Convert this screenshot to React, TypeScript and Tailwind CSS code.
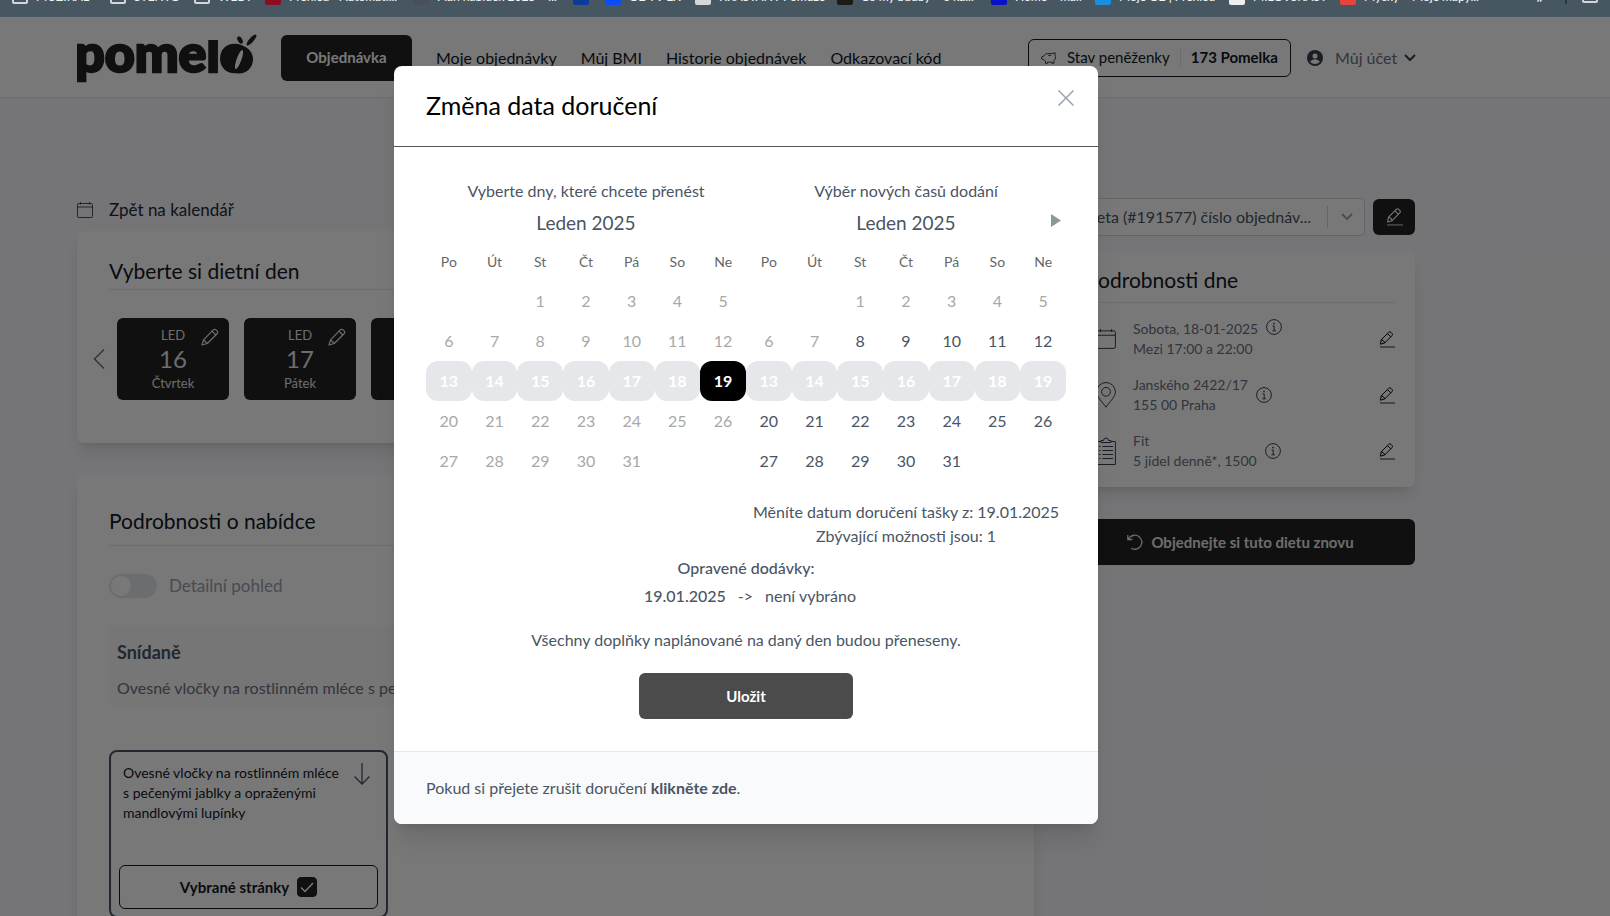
import { useState } from "react";
import type { ReactNode } from "react";
import { clsx } from "clsx";

const BOOKMARKS = [
  { label: "MUZIKÁL", icon: "folder", width: "w-[98px]" },
  { label: "STENTO", icon: "folder", width: "w-[84px]" },
  { label: "WEBY", icon: "folder", width: "w-[71px]" },
  { label: "Přehled - Automati...", icon: "bg-[#8d0c22]", width: "w-[148px]" },
  { label: "Plán nabídek 2025 – ...", icon: "bg-[#4a4f5c]", width: "w-[160px]" },
  { label: "", icon: "bg-[#0b3a9a]", width: "w-[32px]" },
  { label: "O2 TV EX", icon: "bg-[#0a4dff]", width: "w-[90px]" },
  { label: "KRÁSTÁNY Pomůže", icon: "bg-[#d5d8da]", width: "w-[142px]" },
  { label: "Co my budby – o ka...", icon: "bg-[#1c1c12]", width: "w-[154px]" },
  { label: "Home – mail", icon: "bg-[#0612c4]", width: "w-[104px]" },
  { label: "Moje O2 | Přehled", icon: "bg-[#1a8fe0]", width: "w-[134px]" },
  { label: "MILOVSKAST", icon: "bg-[#eeeeee]", width: "w-[111px]" },
  { label: "Myčky – Moje mapy...", icon: "bg-[#e8443c]", width: "w-[196px]" },
];

const NAV = ["Moje objednávky", "Můj BMI", "Historie objednávek", "Odkazovací kód"];

const DAYS = [
  { date: 16, name: "Čtvrtek" },
  { date: 17, name: "Pátek" },
  { date: 18, name: "Sobota" },
];

const WEEKDAYS = ["Po", "Út", "St", "Čt", "Pá", "So", "Ne"];

// January 2025 starts on a Wednesday
const WEEKS = [
  [0, 0, 1, 2, 3, 4, 5],
  [6, 7, 8, 9, 10, 11, 12],
  [13, 14, 15, 16, 17, 18, 19],
  [20, 21, 22, 23, 24, 25, 26],
  [27, 28, 29, 30, 31, 0, 0],
];

function CalendarIcon({ className }: { className: string }) {
  return (
    <svg viewBox="0 0 16 16" fill="none" stroke="currentColor" strokeWidth="0.8" className={className} aria-hidden="true">
      <rect x="0.5" y="1.5" width="15" height="14" rx="1.2" />
      <path d="M.5 5h15M3.5 0v2.5M12.5 0v2.5" />
    </svg>
  );
}

function PencilIcon({ className }: { className: string }) {
  return (
    <svg viewBox="0 0 18 18" fill="none" stroke="currentColor" strokeWidth="1.2" strokeLinejoin="round" className={className} aria-hidden="true">
      <path d="M1 17l1.6-5.2L12.2 1.9a2 2 0 0 1 2.9 0l1 1a2 2 0 0 1 0 2.9L6.3 15.5z" />
      <path d="M2.6 11.8l3.7 3.7M11 3.2l3.8 3.8" />
    </svg>
  );
}

function EditIcon({ className }: { className: string }) {
  return (
    <svg viewBox="0 0 16 17" fill="none" stroke="currentColor" strokeLinejoin="round" className={className} aria-hidden="true">
      <path d="M1.5 13.2l.7-4.4L9.6 1.4a1.7 1.7 0 0 1 2.4 0l.9.9a1.7 1.7 0 0 1 0 2.4L5.7 12z" />
      <path d="M2.2 8.8q2.8.4 3.5 3.2M8.5 2.6l3.2 3.2" />
      <path d="M1 16h15" strokeWidth="0.8" />
    </svg>
  );
}

function InfoIcon() {
  return (
    <svg viewBox="0 0 16 16" fill="none" stroke="currentColor" className="size-4 text-gray-700" aria-hidden="true">
      <circle cx="8" cy="8" r="7.4" />
      <circle cx="8" cy="4.6" r="0.9" fill="currentColor" stroke="none" />
      <path d="M6.6 7h1.6v4.6M6.4 11.8h3.5" />
    </svg>
  );
}

function PinIcon() {
  return (
    <svg viewBox="0 0 20 26" fill="none" stroke="currentColor" className="h-[26px] w-5" aria-hidden="true">
      <path d="M10 25.2C6 19.5.6 14.7.6 9.9a9.4 9.4 0 0 1 18.8 0C19.4 14.7 14 19.5 10 25.2z" />
      <circle cx="10" cy="9.8" r="4.4" />
    </svg>
  );
}

function ClipboardIcon() {
  return (
    <svg viewBox="0 0 20 28" fill="none" stroke="currentColor" className="h-7 w-5" aria-hidden="true">
      <path d="M5 4.5H.6v23h18.8v-23H15" />
      <path d="M5 5.5v-2h2.5a2.5 2.5 0 0 1 5 0H15v2z" />
      <path d="M3 9.5h1.5M3 13.5h1.5M3 17.5h1.5M3 21.5h1.5M6.5 9.5H17M6.5 13.5H17M6.5 17.5H17M6.5 21.5H17" />
    </svg>
  );
}

function Logo() {
  return (
    <svg viewBox="0 0 182 54" className="h-[54px] w-[182px] shrink-0" role="img" aria-label="pomelo">
      <text
        x="-2"
        y="41"
        fontSize="52"
        fontWeight="900"
        fontFamily="Lato, sans-serif"
        fill="#222"
        stroke="#222"
        strokeWidth="2.5"
      >
        pomelo
      </text>
      {/* short ascender on the l */}
      <rect x="128" y="0" width="26" height="9" fill="#fff" />
      <ellipse cx="162" cy="28.5" rx="14" ry="14" fill="#222" />
      <ellipse cx="162" cy="28.5" rx="2.4" ry="10" fill="#fff" transform="rotate(20 162 28.5)" />
      <ellipse cx="163" cy="9" rx="2.3" ry="4" fill="#222" transform="rotate(-28 163 9)" />
      <ellipse cx="174.5" cy="9" rx="2.2" ry="7" fill="#222" transform="rotate(42 174.5 9)" />
    </svg>
  );
}

function BookmarksBar() {
  return (
    <div className="flex h-[17px] items-start overflow-hidden bg-[#465762] pl-3">
      {BOOKMARKS.map((b, i) => (
        <div key={i} className={clsx("-mt-[11px] flex shrink-0 items-center gap-2 overflow-hidden", b.width)}>
          {b.icon === "folder" ? (
            <span className="h-3.5 w-4 shrink-0 rounded-xs border-2 border-gray-300" />
          ) : (
            <span className={clsx("size-4 shrink-0 rounded-xs", b.icon)} />
          )}
          <span className="text-xs leading-4 font-medium whitespace-nowrap text-gray-100">{b.label}</span>
        </div>
      ))}
      <span className="-mt-3 w-[29px] shrink-0 text-lg leading-4 text-gray-100">»</span>
      <span className="h-1 w-0.5 shrink-0 bg-[#2b3740]" />
      <span className="-mt-[11px] ml-[15px] h-3.5 w-4 shrink-0 rounded-xs border-2 border-gray-300" />
    </div>
  );
}

function Header() {
  return (
    <header className="flex h-[81px] items-center border-b border-gray-200 bg-white pt-px pr-[194px] pl-[77px]">
      <Logo />
      <button type="button" className="ml-[22px] h-[46px] w-[131px] shrink-0 rounded-md bg-[#222] text-[15px] font-bold text-white">
        Objednávka
      </button>
      <nav className="ml-6 flex flex-1 gap-6">
        {NAV.map((item) => (
          <a key={item} href="#" className="whitespace-nowrap text-gray-900">
            {item}
          </a>
        ))}
      </nav>
      <div className="flex h-[38px] w-[263px] shrink-0 items-center justify-between rounded-md border border-gray-900 px-3 text-[15px] text-gray-900">
        <svg viewBox="0 0 18 14" fill="none" stroke="currentColor" strokeWidth="0.9" strokeLinejoin="round" className="h-3.5 w-4" aria-hidden="true">
          <path d="M3.5 4.5C4.500 2.800 6 2 8 2h5l2.800-1v2.800c1 2 .6 4.400-1.300 6.200v3h-2.200v-1.300H7.200V13H5v-2.300L3.300 8.800.8 8V5.800z" />
          <path d="M8 4h3.500" />
        </svg>
        <span>Stav peněženky</span>
        <span className="h-5 w-px bg-gray-200" />
        <strong className="font-bold">173 Pomelka</strong>
      </div>
      <button type="button" className="ml-4 flex shrink-0 items-center text-gray-500">
        <svg viewBox="0 0 16 16" className="size-4 text-gray-700" aria-hidden="true">
          <circle cx="8" cy="8" r="8" fill="currentColor" />
          <circle cx="8" cy="6" r="2.5" fill="#fff" />
          <path d="M3.2 12a5.6 5.6 0 0 1 9.600 0 6.500 6.500 0 0 1-9.600 0z" fill="#fff" />
        </svg>
        <span className="ml-3 w-[61px] text-left whitespace-nowrap">Můj účet</span>
        <svg viewBox="0 0 12 8" fill="none" stroke="currentColor" strokeWidth="2" className="ml-2 h-2 w-3 text-gray-700" aria-hidden="true">
          <path d="M1 1l5 5 5-5" />
        </svg>
      </button>
    </header>
  );
}

function DayPicker() {
  return (
    <section className="h-[212px] rounded-md bg-white px-8 pt-[26px] shadow-lg">
      <h2 className="border-b border-gray-200 pb-1 text-[21px] leading-7 text-gray-900">Vyberte si dietní den</h2>
      <div className="-ml-4 flex items-center pt-7">
        <button type="button" aria-label="Předchozí dny" className="mr-3 text-gray-500">
          <svg viewBox="0 0 12 20" fill="none" stroke="currentColor" strokeWidth="1.5" className="h-5 w-3" aria-hidden="true">
            <path d="M11 .5L1.5 10l9.5 9.5" />
          </svg>
        </button>
        <div className="flex gap-[15px]">
          {DAYS.map((day) => (
            <button
              key={day.date}
              type="button"
              className="relative flex h-[82px] w-28 shrink-0 flex-col items-center rounded-md bg-[#222] pt-2 text-gray-200"
            >
              <span className="text-[13px] leading-[18px]">LED</span>
              <span className="text-2xl leading-[30px]">{day.date}</span>
              <span className="text-[13px] leading-[18px]">{day.name}</span>
              <PencilIcon className="absolute top-2.5 right-2.5 size-[18px]" />
            </button>
          ))}
        </div>
      </div>
    </section>
  );
}

function Offer() {
  const [detailed, setDetailed] = useState(false);
  const [selected, setSelected] = useState(true);

  return (
    <section className="mt-8 rounded-md bg-white px-8 pt-8 pb-8 shadow-lg">
      <h2 className="border-b border-gray-200 pb-2.5 text-[21px] leading-7 text-gray-900">Podrobnosti o nabídce</h2>
      <label className="mt-7 flex h-6 items-center gap-3 text-[17px] text-gray-400">
        <input type="checkbox" checked={detailed} onChange={(e) => setDetailed(e.target.checked)} className="peer sr-only" />
        <span className="flex h-6 w-12 items-center rounded-full bg-gray-200 px-0.5 peer-checked:justify-end">
          <span className="size-5 rounded-full bg-white" />
        </span>
        Detailní pohled
      </label>
      <div className="mt-7 h-20 rounded-md bg-neutral-50 px-2 pt-3.5">
        <h3 className="text-lg leading-6 font-bold text-gray-600">Snídaně</h3>
        <p className="mt-3 truncate text-gray-500">Ovesné vločky na rostlinném mléce s pečenými jablky a opraženými mandlovými lupínky</p>
      </div>
      <div className="mt-11 flex h-[168px] w-[279px] flex-col rounded-lg border-2 border-gray-600 px-2 pt-[11px] pb-[7px]">
        <div className="flex justify-between pr-2 pl-1">
          <p className="w-[222px] text-sm leading-5 text-gray-900">
            Ovesné vločky na rostlinném mléce s pečenými jablky a opraženými mandlovými lupínky
          </p>
          <svg viewBox="0 0 16 22" fill="none" stroke="currentColor" strokeWidth="1.3" className="h-[22px] w-4 text-gray-600" aria-hidden="true">
            <path d="M8 0v21M.5 13.5L8 21l7.5-7.5" />
          </svg>
        </div>
        <label className="mt-auto flex h-11 items-center justify-center gap-2 rounded-md border border-gray-900 text-[15px] font-bold text-gray-900">
          Vybrané stránky
          <input type="checkbox" checked={selected} onChange={(e) => setSelected(e.target.checked)} className="peer sr-only" />
          <span className="flex size-5 items-center justify-center rounded-sm border border-[#222] text-white peer-checked:bg-[#222]">
            <svg viewBox="0 0 14 11" fill="none" stroke="currentColor" strokeWidth="1.5" className="h-[11px] w-3.5" aria-hidden="true">
              <path d="M1 5.5l4 4L13 1" />
            </svg>
          </span>
        </label>
      </div>
    </section>
  );
}

function DetailRow({ icon, lines, info }: { icon: ReactNode; lines: [string, string]; info: "first" | "both" }) {
  return (
    <li className="flex h-10 items-center text-sm leading-5 text-gray-500">
      <span className="flex w-[30px] shrink-0 justify-end text-gray-700">{icon}</span>
      <span className="ml-[17px]">
        {lines[0]}
        <br />
        {lines[1]}
      </span>
      <span className={clsx("ml-2", info === "first" && "self-start")}>
        <InfoIcon />
      </span>
      <button type="button" aria-label={`Upravit ${lines[0]}`} className="ml-auto text-black">
        <EditIcon className="h-[17px] w-4" />
      </button>
    </li>
  );
}

function Sidebar() {
  return (
    <aside className="w-[349px] shrink-0">
      <div className="flex items-center gap-2">
        <div className="relative flex-1">
          <select
            aria-label="Objednávka"
            className="h-[38px] w-full appearance-none rounded-sm border border-gray-300 bg-white pr-12 pl-3.5 text-gray-600"
          >
            <option>Dieta (#191577) číslo objednáv...</option>
          </select>
          <span className="pointer-events-none absolute inset-y-2 right-0 flex w-[38px] items-center justify-center border-l border-gray-300 text-gray-400">
            <svg viewBox="0 0 12 8" fill="none" stroke="currentColor" strokeWidth="1.8" className="h-2 w-3" aria-hidden="true">
              <path d="M1 1l5 5 5-5" />
            </svg>
          </span>
        </div>
        <button type="button" aria-label="Upravit objednávku" className="flex h-9 w-[42px] items-center justify-center rounded-md bg-[#222] text-white">
          <EditIcon className="h-[18px] w-[17px]" />
        </button>
      </div>
      <section className="mt-4 h-[235px] rounded-md bg-white px-5 pt-3.5 shadow-lg">
        <h2 className="border-b border-gray-200 pb-2 text-[21px] leading-7 text-gray-900">Podrobnosti dne</h2>
        <ul className="mt-4 space-y-4">
          <DetailRow icon={<CalendarIcon className="size-5" />} lines={["Sobota, 18-01-2025", "Mezi 17:00 a 22:00"]} info="first" />
          <DetailRow icon={<PinIcon />} lines={["Janského 2422/17", "155 00 Praha"]} info="both" />
          <DetailRow icon={<ClipboardIcon />} lines={["Fit", "5 jídel denně*, 1500"]} info="both" />
        </ul>
      </section>
      <button type="button" className="mt-8 flex h-[46px] w-full items-center justify-center gap-2 rounded-md bg-[#222] text-[15px] font-bold text-gray-200">
        <svg viewBox="0 0 16 16" fill="none" stroke="currentColor" strokeWidth="1.3" className="size-4" aria-hidden="true">
          <path d="M.8 1v4.5h4.5M1 5.3l1.5-1.600a7 7 0 1 1 1.700 10.500" />
        </svg>
        Objednejte si tuto dietu znovu
      </button>
    </aside>
  );
}

function Calendar({
  label,
  activeFrom,
  chosen,
  onChoose,
  hasNext,
}: {
  label: string;
  activeFrom: number;
  chosen: number | null;
  onChoose: (day: number) => void;
  hasNext?: boolean;
}) {
  return (
    <div className="flex-1">
      <p className="text-center leading-6">{label}</p>
      <div className="relative py-1">
        <h3 className="text-center text-[19px] leading-8">Leden 2025</h3>
        {hasNext && (
          <button type="button" aria-label="Další měsíc" className="absolute top-[11px] right-[5px] text-[#8b9898]">
            <svg viewBox="0 0 10 13" className="h-[13px] w-2.5" aria-hidden="true">
              <path d="M0 0l10 6.5-10 6.5z" fill="currentColor" />
            </svg>
          </button>
        )}
      </div>
      <table className="w-full table-fixed border-collapse text-center">
        <thead>
          <tr className="h-[38px] text-sm text-[#666]">
            {WEEKDAYS.map((day) => (
              <th key={day} scope="col" className="p-0 font-normal">
                {day}
              </th>
            ))}
          </tr>
        </thead>
        <tbody>
          {WEEKS.map((week, i) => (
            <tr key={i} className="h-10">
              {week.map((day, j) => {
                const booked = day >= 13 && day <= 19;
                const active = day >= activeFrom && !booked;
                return (
                  <td key={j} className="p-0">
                    {day > 0 && (
                      <button
                        type="button"
                        disabled={!active && day !== chosen}
                        onClick={() => onChoose(day)}
                        className={clsx(
                          "h-10 w-full rounded-xl",
                          day === chosen && "bg-black font-bold text-white",
                          day !== chosen && booked && "bg-gray-200 font-bold text-white",
                          day !== chosen && !booked && !active && "text-[#a8a8a8]",
                          day !== chosen && active && "text-gray-600"
                        )}
                      >
                        {day}
                      </button>
                    )}
                  </td>
                );
              })}
            </tr>
          ))}
        </tbody>
      </table>
    </div>
  );
}

function ChangeDateDialog() {
  const [target, setTarget] = useState<number | null>(null);

  return (
    <div
      role="dialog"
      aria-labelledby="dialog-title"
      className="w-[704px] overflow-hidden rounded-lg bg-white text-gray-600 shadow-xl"
    >
      <div className="flex h-[81px] items-start justify-between border-b border-[#555] px-6 pt-6">
        <h1 id="dialog-title" className="pl-2 text-[25px] leading-[30px] text-black">
          Změna data doručení
        </h1>
        <button type="button" aria-label="Zavřít" className="text-gray-400">
          <svg viewBox="0 0 16 16" fill="none" stroke="currentColor" strokeWidth="1.5" className="size-4" aria-hidden="true">
            <path d="M.5.5l15 15M15.5.5l-15 15" />
          </svg>
        </button>
      </div>
      <div className="p-8">
        <div className="flex">
          <Calendar label="Vyberte dny, které chcete přenést" activeFrom={32} chosen={19} onChoose={() => {}} />
          <Calendar label="Výběr nových časů dodání" activeFrom={8} chosen={target} onChoose={setTarget} hasNext />
        </div>
        <div className="mt-[19px] ml-auto w-1/2 text-center">
          <p>Měníte datum doručení tašky z: 19.01.2025</p>
          <p>Zbývající možnosti jsou: 1</p>
        </div>
        <p className="mt-2 text-center font-medium">Opravené dodávky:</p>
        <p className="mt-1 flex justify-center gap-3 pl-2">
          <span className="font-medium">19.01.2025</span>
          <span>-&gt;</span>
          <span>{target ? `${target}.01.2025` : "není vybráno"}</span>
        </p>
        <p className="mt-5 text-center">Všechny doplňky naplánované na daný den budou přeneseny.</p>
        <button type="button" className="mx-auto mt-[21px] block h-[46px] w-[214px] rounded-md bg-[#4b4b4b] text-[15px] font-bold text-white">
          Uložit
        </button>
      </div>
      <div className="border-t border-gray-200 bg-gray-50 px-8 py-6">
        <p>
          Pokud si přejete zrušit doručení{" "}
          <a href="#" className="font-bold">
            klikněte zde
          </a>
          .
        </p>
      </div>
    </div>
  );
}

export default function App() {
  return (
    <div className="flex h-screen flex-col overflow-hidden font-[Lato,'Noto_Sans',sans-serif] text-base">
      <BookmarksBar />
      <div className="relative min-h-0 flex-1 overflow-hidden bg-[#f8f8fc]">
        <Header />
        <main className="flex items-start gap-8 pt-[100px] pr-[195px] pl-[77px]">
          <div className="min-w-0 flex-1">
            <a href="#" className="flex h-[33px] items-start gap-4 text-[17px] leading-6 text-gray-800">
              <CalendarIcon className="mt-1 size-4" />
              Zpět na kalendář
            </a>
            <DayPicker />
            <Offer />
          </div>
          <Sidebar />
        </main>
        <div className="absolute inset-0 flex items-start justify-center bg-black/53 pt-[49px] pr-[118px]">
          <ChangeDateDialog />
        </div>
      </div>
    </div>
  );
}
